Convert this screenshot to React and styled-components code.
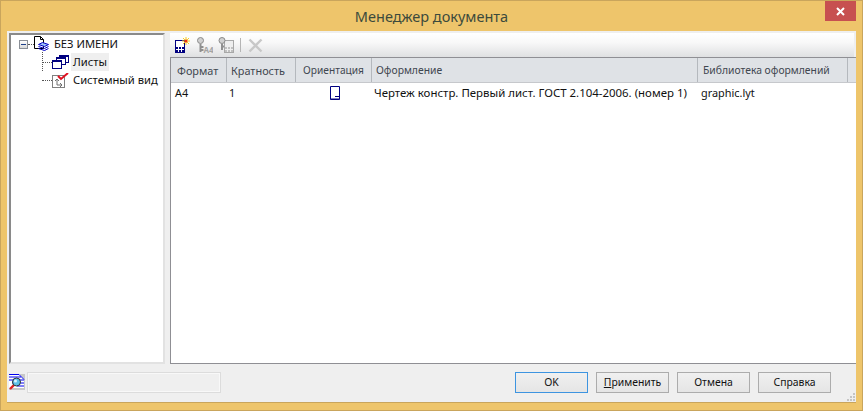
import React from 'react';
import styled, { createGlobalStyle } from 'styled-components';

const GlobalStyle = createGlobalStyle`
  html, body { margin: 0; padding: 0; background: #eec56b; }
  body { font-family: "Noto Sans", "Open Sans", sans-serif; }
`;

const Window = styled.div`
  width: 863px;
  height: 411px;
  box-sizing: border-box;
  border: 1px solid #c9a55c;
  background: #eec56b;
  padding: 0 6px 7px 6px;
  display: flex;
  flex-direction: column;
  overflow: hidden;
`;

const TitleBar = styled.div`
  height: 30px;
  flex: none;
  position: relative;
  display: flex;
  align-items: center;
  justify-content: center;
  font-size: 14.5px;
  color: #3c4a3c;
`;

const CloseButton = styled.div`
  position: absolute;
  right: 0;
  top: 0;
  width: 31px;
  height: 20px;
  background: #c75050;
  display: flex;
  align-items: center;
  justify-content: center;
`;

const Client = styled.div`
  flex: 1;
  min-height: 0;
  background: #efefef;
  border-bottom: 1px solid #c9a55c;
  display: flex;
  flex-direction: column;
  padding: 2px 0 0 2px;
`;

const Main = styled.div`
  height: 331px;
  flex: none;
  display: flex;
  gap: 5px;
`;

const TreePanel = styled.div`
  width: 156px;
  flex: none;
  box-sizing: border-box;
  background: #fff;
  border-top: 2px solid #8a8a8a;
  border-left: 2px solid #8a8a8a;
  border-right: 2px solid #e2e2e2;
  border-bottom: 2px solid #e2e2e2;
  padding: 0 0 0 8px;
  font-size: 11.2px;
  color: #111;
`;

const TreeRow = styled.div`
  height: 18px;
  display: flex;
  align-items: center;
  padding-left: ${p => p.$indent || 0}px;
`;

const Expander = styled.span`
  width: 9px;
  height: 9px;
  box-sizing: border-box;
  border: 1px solid #8a8f96;
  background: linear-gradient(#fff, #d8d8d8);
  display: flex;
  align-items: center;
  justify-content: center;
  &::after {
    content: '';
    width: 5px;
    height: 1px;
    background: #1d3f8a;
  }
`;

const Dots = styled.span`
  width: ${p => p.$w}px;
  border-top: 1px dotted #555;
  flex: none;
`;

const TreeLabel = styled.span`
  margin-left: ${p => p.$gap}px;
  padding: 0 2px;
  line-height: 18px;
  white-space: nowrap;
  background: ${p => (p.$selected ? '#efefef' : 'transparent')};
`;

const TreeLines = styled.div`
  position: relative;
  &::before {
    content: '';
    position: absolute;
    left: 23px;
    top: -1px;
    height: 19px;
    border-left: 1px dotted #555;
  }
`;

const RightPane = styled.div`
  flex: 1;
  min-width: 0;
  display: flex;
  flex-direction: column;
`;

const Toolbar = styled.div`
  height: 24px;
  flex: none;
  box-sizing: border-box;
  background: linear-gradient(#fff 0%, #f8f8f8 40%, #dfe0e2 100%);
  display: flex;
  align-items: center;
  padding-left: 5px;
  gap: 5px;
  margin-right: 2px;
`;

const ToolSep = styled.span`
  width: 1px;
  height: 14px;
  background: #b5b5b5;
  margin: 0 2px 0 0;
`;

const ListPanel = styled.div`
  flex: 1;
  min-height: 0;
  box-sizing: border-box;
  background: #fff;
  border: 1px solid #8f8f94;
  border-right: none;
  color: #111;
`;

const HeaderRow = styled.div`
  height: 25px;
  background: #dfe2e6;
  border-bottom: 1px solid #c6c8cc;
  box-sizing: border-box;
  display: flex;
  color: #3f4750;
`;

const HeaderCell = styled.div`
  width: ${p => p.$w}px;
  flex: none;
  box-sizing: border-box;
  border-right: 1px solid #b4b8bd;
  padding-left: ${p => p.$pad}px;
  font-size: ${p => p.$size}px;
  line-height: 25px;
  white-space: nowrap;
`;

const DataRow = styled.div`
  height: 19px;
  display: flex;
  align-items: center;
  font-size: 10.9px;
`;

const DataCell = styled.div`
  width: ${p => p.$w}px;
  flex: none;
  box-sizing: border-box;
  padding-left: ${p => p.$pad}px;
  white-space: nowrap;
  display: flex;
  align-items: center;
  font-size: ${p => p.$size || 'inherit'};
`;

const Footer = styled.div`
  flex: 1;
  min-height: 0;
  display: flex;
  align-items: center;
  padding-bottom: 2px;
  position: relative;
`;

const StatusField = styled.div`
  width: 194px;
  height: 21px;
  box-sizing: border-box;
  border: 1px solid #dcdcdc;
  box-shadow: inset 0 0 0 1px #f8f8f8;
  margin-left: 2px;
`;

const Buttons = styled.div`
  margin-left: auto;
  display: flex;
  gap: 8px;
  margin-right: 25px;
`;

const Button = styled.div`
  width: 73px;
  height: 21px;
  box-sizing: border-box;
  border: 1px solid ${p => (p.$primary ? '#3d94e0' : '#acacac')};
  background: linear-gradient(#f0f0f0, #e5e5e5);
  display: flex;
  align-items: center;
  justify-content: center;
  font-size: 10.4px;
  color: #111;
  u { text-decoration: underline; }
`;

const Grip = styled.svg`
  position: absolute;
  right: 1px;
  bottom: 1px;
`;

const columns = [
  { w: 56, pad: 6, size: 10.9, title: 'Формат' },
  { w: 69, pad: 4, size: 10.9, title: 'Кратность' },
  { w: 76, pad: 7, size: 10.2, title: 'Ориентация' },
  { w: 326, pad: 4, size: 10.35, title: 'Оформление' },
  { w: 150, pad: 5, size: 10.35, title: 'Библиотека оформлений' },
];

const DocIcon = () => (
  <svg width="16" height="16" viewBox="0 0 16 16" style={{ flex: 'none' }}>
    <path d="M.5.5h6l3 3v9h-9z" fill="#fff" stroke="#000" />
    <path d="M6.5.5v3h3" fill="none" stroke="#000" />
    <path d="M4.5 8.5l4-2 6 2-4 2z" fill="#9ec3f5" stroke="#0000c8" />
    <path d="M4.5 10.5l6 2 4-2M4.5 12.5l6 2 4-2" fill="none" stroke="#0000c8" />
  </svg>
);

const SheetsIcon = () => (
  <svg width="17" height="14" viewBox="0 0 17 14" style={{ flex: 'none' }}>
    <g fill="#fff" stroke="#000080">
      <rect x="7.5" y=".5" width="9" height="7" />
      <rect x="4.5" y="2.5" width="9" height="7" />
      <rect x=".5" y="5.5" width="9" height="8" />
    </g>
    <path d="M8 1h8v1H8zM5 3h8v1H5zM1 6h8v1H1z" fill="#000080" />
  </svg>
);

const SystemViewIcon = () => (
  <svg width="17" height="15" viewBox="0 0 17 15" style={{ flex: 'none' }}>
    <rect x=".5" y="2.5" width="12" height="12" fill="#fff" stroke="#808080" />
    <path d="M5 12V6M3 8l2-2 2 2M5 12h5M8 10l2 2-2 2" fill="none" stroke="#707070" />
    <path d="M6 3l3 3 7-6" fill="none" stroke="#e01020" strokeWidth="2" />
  </svg>
);

const NewSheetIcon = () => (
  <svg width="16" height="16" viewBox="0 0 16 16">
    <rect x=".5" y="3.5" width="9" height="12" fill="#fff" stroke="#000080" />
    <path d="M1 10h8v5H1z" fill="#000080" />
    <path d="M3.5 10v5M6.5 10v5M1 12.5h8" stroke="#fff" />
    <path d="M11 0v8M7 4h8M8 1l6 6M14 1l-6 6" stroke="#f8d020" />
    <circle cx="11" cy="4" r="1.5" fill="#f03010" />
  </svg>
);

const KeyIcon = () => (
  <svg width="17" height="16" viewBox="0 0 17 16">
    <circle cx="4.5" cy="3.5" r="3" fill="#d0d0d0" stroke="#8a8a8a" />
    <path d="M4.5 7v8M5 10h2.5M5 13h2.5" stroke="#8f8f8f" strokeWidth="2" fill="none" />
    <text x="7.5" y="15.5" fontSize="8" fontWeight="700" fill="#a4a4a4" fontFamily="Noto Sans, sans-serif">A4</text>
  </svg>
);

const KeySheetIcon = () => (
  <svg width="17" height="16" viewBox="0 0 17 16">
    <rect x="6.5" y="3.5" width="9" height="12" fill="#eee" stroke="#a8a8a8" />
    <path d="M7 10h8v5H7z" fill="#c0c0c0" />
    <path d="M9.5 10v5M12.5 10v5M7 12.5h8" stroke="#eee" />
    <circle cx="4" cy="3.5" r="3" fill="#d0d0d0" stroke="#8a8a8a" />
    <path d="M4 7v6M4 9.5h2" stroke="#8f8f8f" strokeWidth="2" fill="none" />
  </svg>
);

const DeleteIcon = () => (
  <svg width="15" height="15" viewBox="0 0 15 15">
    <path d="M1.5 1.5l12 12M13.5 1.5l-12 12" stroke="#c8c8c8" strokeWidth="2.4" />
  </svg>
);

const PortraitIcon = () => (
  <svg width="10" height="14" viewBox="0 0 10 14">
    <path d="M.5.5h9v13h-9z" fill="#fff" stroke="#000080" />
    <path d="M.5 13h9M5 10.5h4.5" fill="none" stroke="#000080" />
  </svg>
);

const PreviewIcon = () => (
  <svg width="16" height="16" viewBox="0 0 16 16" style={{ flex: 'none' }}>
    <rect width="16" height="16" fill="#c8c8c8" />
    <path d="M0 0h10l5 5v9H0z" fill="#fff" />
    <path d="M0 .5h10l5 5M0 6h15M3 9h12M8 12h7M0 3h12" stroke="#0000f0" fill="none" />
    <path d="M1 15l4-4" stroke="#e02020" strokeWidth="2.4" />
    <circle cx="7.5" cy="8" r="4" fill="#5cc0e8" stroke="#303030" />
    <circle cx="6.5" cy="7" r="1.5" fill="#d8f4ff" />
  </svg>
);

const App = () => (
  <Window>
    <GlobalStyle />
    <TitleBar>
      Менеджер документа
      <CloseButton>
        <svg width="9" height="9" viewBox="0 0 9 9">
          <path d="M1 1l7 7M8 1l-7 7" stroke="#fff" strokeWidth="2" />
        </svg>
      </CloseButton>
    </TitleBar>
    <Client>
      <Main>
        <TreePanel>
          <TreeRow>
            <Expander />
            <Dots $w={6} />
            <DocIcon />
            <TreeLabel $gap={2}>БЕЗ ИМЕНИ</TreeLabel>
          </TreeRow>
          <TreeLines>
            <TreeRow $indent={23}>
              <Dots $w={10} />
              <SheetsIcon />
              <TreeLabel $gap={2} $selected>Листы</TreeLabel>
            </TreeRow>
            <TreeRow $indent={23}>
              <Dots $w={10} />
              <SystemViewIcon />
              <TreeLabel $gap={2}>Системный вид</TreeLabel>
            </TreeRow>
          </TreeLines>
        </TreePanel>
        <RightPane>
          <Toolbar>
            <NewSheetIcon />
            <KeyIcon />
            <KeySheetIcon />
            <ToolSep />
            <DeleteIcon />
          </Toolbar>
          <ListPanel>
            <HeaderRow>
              {columns.map(c => (
                <HeaderCell key={c.title} $w={c.w} $pad={c.pad} $size={c.size}>{c.title}</HeaderCell>
              ))}
            </HeaderRow>
            <DataRow>
              <DataCell $w={columns[0].w} $pad={4}>А4</DataCell>
              <DataCell $w={columns[1].w} $pad={2}>1</DataCell>
              <DataCell $w={columns[2].w} $pad={34}><PortraitIcon /></DataCell>
              <DataCell $w={columns[3].w} $pad={2} $size="11.45px">Чертеж констр. Первый лист. ГОСТ 2.104-2006. (номер 1)</DataCell>
              <DataCell $w={columns[4].w} $pad={3}>graphic.lyt</DataCell>
            </DataRow>
          </ListPanel>
        </RightPane>
      </Main>
      <Footer>
        <PreviewIcon />
        <StatusField />
        <Buttons>
          <Button $primary>OK</Button>
          <Button><span><u>П</u>рименить</span></Button>
          <Button>Отмена</Button>
          <Button>Справка</Button>
        </Buttons>
        <Grip width="9" height="9" viewBox="0 0 9 9">
          <path d="M7 1h2v2H7zM4 4h2v2H4zM7 4h2v2H7zM1 7h2v2H1zM4 7h2v2H4zM7 7h2v2H7z" fill="#c4c4c4" />
        </Grip>
      </Footer>
    </Client>
  </Window>
);

export default App;
